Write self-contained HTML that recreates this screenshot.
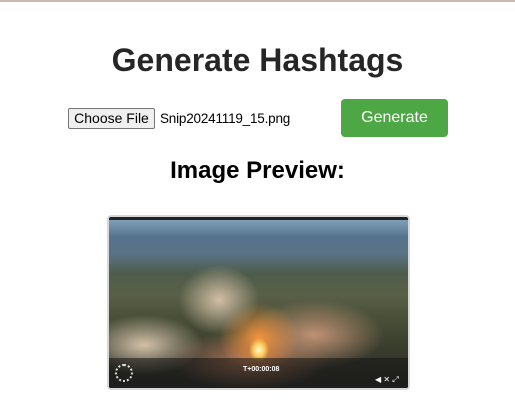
<!DOCTYPE html>
<html><head><style>
body{margin:0;width:515px;height:407px;background:#fff;font-family:"Liberation Sans",Arial,sans-serif;position:relative;overflow:hidden}
.top{position:absolute;left:0;top:0;width:515px;height:2px;background:#c9b9b1}
h1{position:absolute;left:0;width:515px;top:41px;margin:0;text-align:center;font-size:32px;font-weight:bold;color:#262626;line-height:38px}
.fb{position:absolute;left:68px;top:108px;width:87px;height:21px;box-sizing:border-box;border:1px solid #767676;border-radius:2px;background:#efefef;font-size:14px;line-height:19px;text-align:center;color:#000}
.fn{position:absolute;left:160px;top:110px;font-size:13.5px;letter-spacing:-0.2px;color:#000;line-height:17px}
.btn{position:absolute;left:341px;top:99px;width:107px;height:38px;background:#4ca744;border-radius:4px;color:#fff;font-size:16px;line-height:38px;text-align:center}
h2{position:absolute;left:0;width:515px;top:156px;margin:0;text-align:center;font-size:24px;font-weight:bold;color:#000;line-height:30px}
.img{position:absolute;left:107px;top:215px;width:303px;height:175px;box-sizing:border-box;border:2px solid #d8d8d8;border-radius:4px;overflow:hidden;background:#222}
.sc{position:absolute;left:0;top:3px;right:0;bottom:0;
background:
radial-gradient(ellipse 10px 12px at 150px 130px,#fff8d8 0,#ffd060 50%,rgba(255,140,40,0) 100%),
radial-gradient(ellipse 40px 35px at 150px 118px,rgba(250,150,60,.95),rgba(240,130,70,0) 100%),
radial-gradient(ellipse 70px 35px at 205px 115px,rgba(200,150,120,.95),rgba(200,150,110,0) 100%),
radial-gradient(ellipse 60px 30px at 35px 125px,rgba(220,200,175,.95),rgba(200,180,150,0) 100%),
radial-gradient(ellipse 40px 35px at 110px 80px,rgba(215,195,170,.95),rgba(200,180,160,0) 100%),
radial-gradient(ellipse 80px 30px at 140px 140px,rgba(180,120,90,.95),rgba(160,110,80,0) 100%),
linear-gradient(180deg,#7f9fb8 0%,#56738e 10%,#5a7286 20%,#4e5c4a 32%,#5a6048 45%,#4a5038 58%,#3a3e2e 75%,#2a2a26 100%)}
.bar{position:absolute;left:0;right:0;bottom:0;height:30px;background:rgba(20,20,20,.55);color:#fff;font-size:7px}
</style></head><body>
<div class="top"></div>
<h1>Generate Hashtags</h1>
<div class="fb">Choose File</div>
<div class="fn">Snip20241119_15.png</div>
<div class="btn">Generate</div>
<h2>Image Preview:</h2>
<div class="img"><div class="sc"></div>
<div class="bar">
<div style="position:absolute;left:6px;top:6px;width:18px;height:18px;border-radius:50%;border:2px dotted #ddd;box-sizing:border-box"></div>
<div style="position:absolute;left:134px;top:8px;font-weight:bold">T+00:00:08</div>
<div style="position:absolute;left:266px;top:17px;font-size:8px">◀ ✕ ⤢</div>
</div></div>
</body></html>
